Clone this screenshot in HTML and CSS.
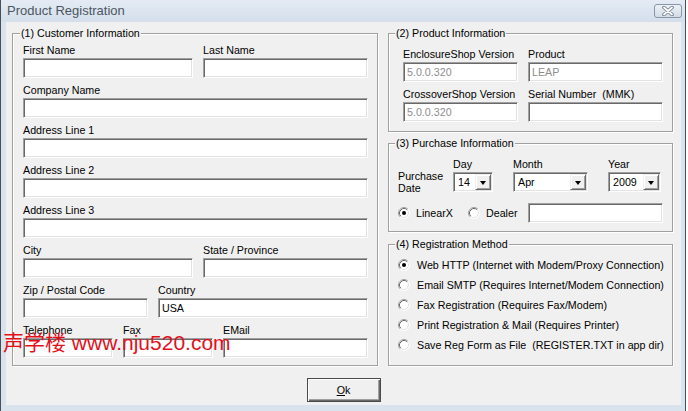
FILE: index.html
```html
<!DOCTYPE html>
<html>
<head>
<meta charset="utf-8">
<link rel="stylesheet" href="styles.css">
</head>
<body>
<div class="window">
  <div class="titlebar">
    <span class="title">Product Registration</span>
    <span class="close"><svg width="14" height="10" viewBox="0 0 14 10"><path d="M3 1.5 L11 8.5 M11 1.5 L3 8.5" stroke="#6f7c8c" stroke-width="3.6" stroke-linecap="round"/><path d="M3 1.5 L11 8.5 M11 1.5 L3 8.5" stroke="#fff" stroke-width="1.8" stroke-linecap="round"/></svg></span>
  </div>
  <div class="frame">
    <div class="client">
      <div class="columns">
        <div class="group g1">
          <div class="legend">(1) Customer Information</div>
          <div class="rows">
            <div class="row">
              <div class="field w170"><label>First Name</label><div class="input"></div></div>
              <div class="field w165"><label>Last Name</label><div class="input"></div></div>
            </div>
            <div class="row">
              <div class="field w345"><label>Company Name</label><div class="input"></div></div>
            </div>
            <div class="row">
              <div class="field w345"><label>Address Line 1</label><div class="input"></div></div>
            </div>
            <div class="row">
              <div class="field w345"><label>Address Line 2</label><div class="input"></div></div>
            </div>
            <div class="row">
              <div class="field w345"><label>Address Line 3</label><div class="input"></div></div>
            </div>
            <div class="row">
              <div class="field w170"><label>City</label><div class="input"></div></div>
              <div class="field w165"><label>State / Province</label><div class="input"></div></div>
            </div>
            <div class="row">
              <div class="field w125"><label>Zip / Postal Code</label><div class="input"></div></div>
              <div class="field w210"><label>Country</label><div class="input">USA</div></div>
            </div>
            <div class="row">
              <div class="field w90"><label>Telephone</label><div class="input"></div></div>
              <div class="field w90"><label>Fax</label><div class="input"></div></div>
              <div class="field w145"><label>EMail</label><div class="input"></div></div>
            </div>
          </div>
        </div>

        <div class="rightcol">
          <div class="group g2">
            <div class="legend">(2) Product Information</div>
            <div class="prod-grid">
              <div class="field w115"><label>EnclosureShop Version</label><div class="input disabled">5.0.0.320</div></div>
              <div class="field w135"><label>Product</label><div class="input disabled">LEAP</div></div>
              <div class="field w115"><label>CrossoverShop Version</label><div class="input disabled">5.0.0.320</div></div>
              <div class="field w135"><label>Serial Number&nbsp; (MMK)</label><div class="input"></div></div>
            </div>
          </div>

          <div class="group g3">
            <div class="legend">(3) Purchase Information</div>
            <div class="date">
              <div class="pd-label">Purchase<br>Date</div>
              <label class="dl c2">Day</label>
              <label class="dl c3">Month</label>
              <label class="dl c4">Year</label>
              <div class="combo w40 c2"><span class="ctext">14</span><span class="drop"><i></i></span></div>
              <div class="combo w75 c3"><span class="ctext">Apr</span><span class="drop"><i></i></span></div>
              <div class="combo w53 c4"><span class="ctext">2009</span><span class="drop"><i></i></span></div>
            </div>
            <div class="src-row">
              <div class="opt opt-linear">
                <svg class="radio" width="12" height="12" viewBox="0 0 12 12"><circle cx="6" cy="6" r="5.5" fill="#fff"/><path d="M2.11 9.89 A5.5 5.5 0 0 1 9.89 2.11" stroke="#a0a0a0" fill="none"/><path d="M9.89 2.11 A5.5 5.5 0 0 1 2.11 9.89" stroke="#fff" fill="none"/><path d="M2.82 9.18 A4.5 4.5 0 0 1 9.18 2.82" stroke="#696969" fill="none"/><path d="M9.18 2.82 A4.5 4.5 0 0 1 2.82 9.18" stroke="#e3e3e3" fill="none"/><circle cx="6" cy="6" r="2" fill="#000"/></svg>
                <span>LinearX</span>
              </div>
              <div class="opt opt-dealer">
                <svg class="radio" width="12" height="12" viewBox="0 0 12 12"><circle cx="6" cy="6" r="5.5" fill="#fff"/><path d="M2.11 9.89 A5.5 5.5 0 0 1 9.89 2.11" stroke="#a0a0a0" fill="none"/><path d="M9.89 2.11 A5.5 5.5 0 0 1 2.11 9.89" stroke="#fff" fill="none"/><path d="M2.82 9.18 A4.5 4.5 0 0 1 9.18 2.82" stroke="#696969" fill="none"/><path d="M9.18 2.82 A4.5 4.5 0 0 1 2.82 9.18" stroke="#e3e3e3" fill="none"/></svg>
                <span>Dealer</span>
              </div>
              <div class="input w135"></div>
            </div>
          </div>

          <div class="group g4">
            <div class="legend">(4) Registration Method</div>
            <div class="methods">
              <div class="opt method">
                <svg class="radio" width="12" height="12" viewBox="0 0 12 12"><circle cx="6" cy="6" r="5.5" fill="#fff"/><path d="M2.11 9.89 A5.5 5.5 0 0 1 9.89 2.11" stroke="#a0a0a0" fill="none"/><path d="M9.89 2.11 A5.5 5.5 0 0 1 2.11 9.89" stroke="#fff" fill="none"/><path d="M2.82 9.18 A4.5 4.5 0 0 1 9.18 2.82" stroke="#696969" fill="none"/><path d="M9.18 2.82 A4.5 4.5 0 0 1 2.82 9.18" stroke="#e3e3e3" fill="none"/><circle cx="6" cy="6" r="2" fill="#000"/></svg>
                <span>Web HTTP (Internet with Modem/Proxy Connection)</span>
              </div>
              <div class="opt method">
                <svg class="radio" width="12" height="12" viewBox="0 0 12 12"><circle cx="6" cy="6" r="5.5" fill="#fff"/><path d="M2.11 9.89 A5.5 5.5 0 0 1 9.89 2.11" stroke="#a0a0a0" fill="none"/><path d="M9.89 2.11 A5.5 5.5 0 0 1 2.11 9.89" stroke="#fff" fill="none"/><path d="M2.82 9.18 A4.5 4.5 0 0 1 9.18 2.82" stroke="#696969" fill="none"/><path d="M9.18 2.82 A4.5 4.5 0 0 1 2.82 9.18" stroke="#e3e3e3" fill="none"/></svg>
                <span>Email SMTP (Requires Internet/Modem Connection)</span>
              </div>
              <div class="opt method">
                <svg class="radio" width="12" height="12" viewBox="0 0 12 12"><circle cx="6" cy="6" r="5.5" fill="#fff"/><path d="M2.11 9.89 A5.5 5.5 0 0 1 9.89 2.11" stroke="#a0a0a0" fill="none"/><path d="M9.89 2.11 A5.5 5.5 0 0 1 2.11 9.89" stroke="#fff" fill="none"/><path d="M2.82 9.18 A4.5 4.5 0 0 1 9.18 2.82" stroke="#696969" fill="none"/><path d="M9.18 2.82 A4.5 4.5 0 0 1 2.82 9.18" stroke="#e3e3e3" fill="none"/></svg>
                <span>Fax Registration (Requires Fax/Modem)</span>
              </div>
              <div class="opt method">
                <svg class="radio" width="12" height="12" viewBox="0 0 12 12"><circle cx="6" cy="6" r="5.5" fill="#fff"/><path d="M2.11 9.89 A5.5 5.5 0 0 1 9.89 2.11" stroke="#a0a0a0" fill="none"/><path d="M9.89 2.11 A5.5 5.5 0 0 1 2.11 9.89" stroke="#fff" fill="none"/><path d="M2.82 9.18 A4.5 4.5 0 0 1 9.18 2.82" stroke="#696969" fill="none"/><path d="M9.18 2.82 A4.5 4.5 0 0 1 2.82 9.18" stroke="#e3e3e3" fill="none"/></svg>
                <span>Print Registration &amp; Mail (Requires Printer)</span>
              </div>
              <div class="opt method">
                <svg class="radio" width="12" height="12" viewBox="0 0 12 12"><circle cx="6" cy="6" r="5.5" fill="#fff"/><path d="M2.11 9.89 A5.5 5.5 0 0 1 9.89 2.11" stroke="#a0a0a0" fill="none"/><path d="M9.89 2.11 A5.5 5.5 0 0 1 2.11 9.89" stroke="#fff" fill="none"/><path d="M2.82 9.18 A4.5 4.5 0 0 1 9.18 2.82" stroke="#696969" fill="none"/><path d="M9.18 2.82 A4.5 4.5 0 0 1 2.82 9.18" stroke="#e3e3e3" fill="none"/></svg>
                <span>Save Reg Form as File&nbsp; (REGISTER.TXT in app dir)</span>
              </div>
            </div>
          </div>
        </div>
      </div>
      <div class="buttons">
        <button class="btn"><u>O</u>k</button>
      </div>
    </div>
  </div>
  <div class="watermark"><span class="cjk">声学楼</span> www.nju520.com</div>
</div>
</body>
</html>
```

FILE: styles.css
```css
* { box-sizing: border-box; }
html, body { margin: 0; padding: 0; background: #ffffff; }
body {
  font-family: "Liberation Sans", Arial, sans-serif;
  font-size: 10.7px;
  color: #000;
}
.window {
  position: relative;
  width: 686px;
  height: 411px;
  border-left: 1px solid #4a4f57;
  border-right: 1px solid #4a4f57;
  display: flex;
  flex-direction: column;
  background: #d9e3ee;
}
.titlebar {
  height: 22px;
  flex: none;
  display: flex;
  align-items: flex-start;
  justify-content: space-between;
  padding: 0 3px 0 6px;
  background: linear-gradient(#e4ebf4, #d4dfeb);
}
.title {
  font-size: 13px;
  line-height: 22px;
  color: #4d5560;
}
.close {
  margin-top: 4px;
  width: 28px;
  height: 14px;
  border: 1px solid #8796a8;
  border-radius: 3px;
  background: linear-gradient(#edf1f6, #d3dce7);
  display: flex;
  align-items: center;
  justify-content: center;
}
.frame {
  flex: 1;
  padding: 0 4px 6px 5px;
}
.client {
  height: 383px;
  background: #f0f0f0;
  padding: 11px 7px 0 6px;
}
.columns {
  display: flex;
  gap: 10px;
  align-items: flex-start;
}
.group {
  border: 1px solid #a0a0a0;
  box-shadow: inset 1px 1px 0 #fff, 1px 1px 0 #fff;
}
.legend {
  display: table;
  margin-top: -7px;
  margin-left: -3px;
  padding: 0 1px;
  background: #f0f0f0;
  line-height: 13px;
  height: 13px;
  white-space: nowrap;
}
.g1 {
  width: 366px;
  padding: 0 9px 7px 10px;
}
.rows {
  margin-top: 4px;
  display: flex;
  flex-direction: column;
  gap: 6px;
}
.row {
  display: flex;
  gap: 10px;
}
.field {
  display: flex;
  flex-direction: column;
  gap: 1px;
}
.field label, .dl {
  display: block;
  line-height: 13px;
  height: 13px;
  white-space: nowrap;
}
.input {
  height: 20px;
  background: #fff;
  border: 1px solid;
  border-color: #a0a0a0 #fff #fff #a0a0a0;
  box-shadow: inset 1px 1px 0 #696969, inset -1px -1px 0 #e3e3e3;
  padding: 0 3px;
  line-height: 18px;
  white-space: nowrap;
}
.input.disabled { color: #8e8e8e; }
.w40 { width: 40px; }
.w53 { width: 53px; }
.w75 { width: 75px; }
.w90 { width: 90px; }
.w115 { width: 115px; }
.w125 { width: 125px; }
.w135 { width: 135px; }
.w145 { width: 145px; }
.w165 { width: 165px; }
.w170 { width: 170px; }
.w210 { width: 210px; }
.w345 { width: 345px; }

.rightcol {
  width: 285px;
  display: flex;
  flex-direction: column;
}
.g2 {
  padding: 0 9px 9px 14px;
}
.g2 .legend { margin-left: -8px; }
.prod-grid {
  margin-top: 8px;
  display: grid;
  grid-template-columns: 115px 135px;
  column-gap: 10px;
  row-gap: 6px;
}
.g3 {
  margin-top: 11px;
  padding: 0 9px 8px 9px;
}
.date {
  margin-top: 8px;
  display: grid;
  grid-template-columns: 55px 60px 95px 53px;
  grid-template-rows: 13px 20px;
  row-gap: 1px;
}
.pd-label {
  grid-column: 1;
  grid-row: 1 / 3;
  align-self: end;
  margin-bottom: -2px;
  line-height: 12px;
  white-space: nowrap;
}
.c2 { grid-column: 2; }
.c3 { grid-column: 3; }
.c4 { grid-column: 4; }
.combo {
  grid-row: 2;
  height: 20px;
  display: flex;
  background: #fff;
  border: 1px solid;
  border-color: #a0a0a0 #fff #fff #a0a0a0;
  box-shadow: inset 1px 1px 0 #696969, inset -1px -1px 0 #e3e3e3;
  padding: 1px;
}
.ctext {
  flex: 1;
  padding-left: 3px;
  line-height: 16px;
  white-space: nowrap;
  overflow: hidden;
}
.drop {
  width: 16px;
  height: 16px;
  flex: none;
  background: #f0f0f0;
  border: 1px solid;
  border-color: #f0f0f0 #696969 #696969 #f0f0f0;
  box-shadow: inset 1px 1px 0 #fff, inset -1px -1px 0 #a0a0a0;
  display: flex;
  align-items: center;
  justify-content: center;
}
.drop i {
  display: block;
  width: 0;
  height: 0;
  border-left: 3.5px solid transparent;
  border-right: 3.5px solid transparent;
  border-top: 4px solid #000;
  margin-top: 1px;
}
.src-row {
  margin-top: 11px;
  display: flex;
  align-items: center;
  height: 20px;
}
.opt {
  display: flex;
  align-items: center;
  gap: 6px;
  white-space: nowrap;
}
.radio { flex: none; display: block; }
.opt-linear { width: 70px; }
.opt-dealer { width: 60px; }
.g4 {
  margin-top: 12px;
  padding: 0 9px 10px 9px;
}
.methods {
  margin-top: 4px;
  display: flex;
  flex-direction: column;
}
.method {
  height: 20px;
  gap: 7px;
}
.buttons {
  margin: 12px -7px 0 -6px;
  display: flex;
  justify-content: center;
}
.btn {
  width: 74px;
  height: 24px;
  font-family: "Liberation Sans", Arial, sans-serif;
  font-size: 10.7px;
  color: #000;
  background: #f0f0f0;
  border: 1px solid #4a4a4a;
  box-shadow: inset 1px 1px 0 #fff, inset -1px -1px 0 #696969, inset -2px -2px 0 #a0a0a0;
  padding: 0;
}
.watermark {
  position: absolute;
  left: 2px;
  top: 329px;
  font-family: "Liberation Sans", "Noto Sans CJK SC", sans-serif;
  font-size: 21px;
  line-height: 24px;
  color: #e3101c;
  white-space: nowrap;
}
.cjk {
  font-family: "Noto Sans CJK SC", sans-serif;
}
```
